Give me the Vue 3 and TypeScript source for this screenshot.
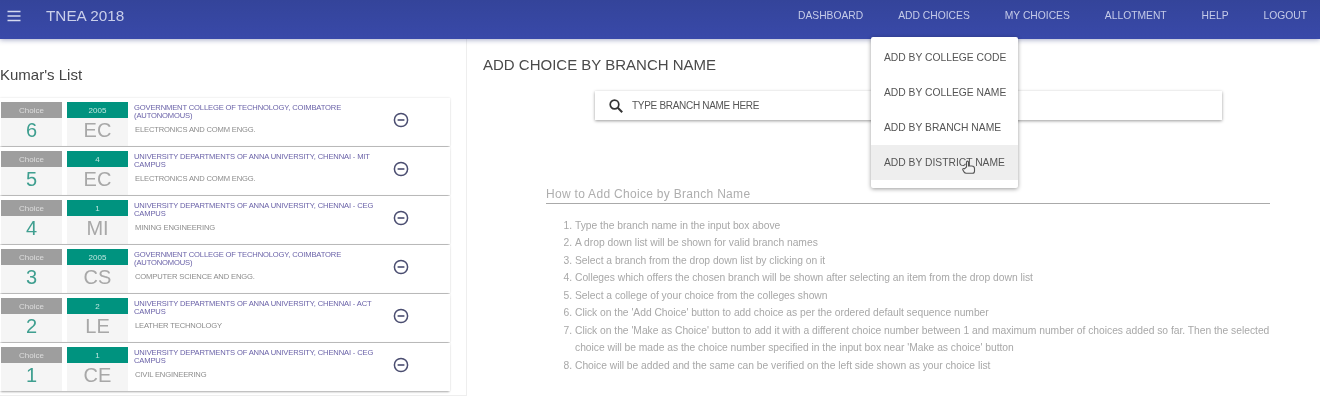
<template>
  <div class="page">
    <header class="topbar">
      <svg class="menu-icon" width="16" height="12" viewBox="0 0 16 12"><path d="M1.5 1.5h13M1.5 6h13M1.5 10.5h13" stroke="#d5daf0" stroke-width="1.6" fill="none" /></svg>
      <span class="brand">TNEA 2018</span>
      <nav class="nav">
        <a v-for="item in navItems" :key="item">{{ item }}</a>
      </nav>
    </header>

    <div class="menu">
      <div v-for="item in menuItems" :key="item" class="menu-item" :class="{ hover: item === 'ADD BY DISTRICT NAME' }">{{ item }}</div>
      <svg class="cursor" width="14" height="16" viewBox="0 0 14 16">
        <path d="M4.5 7V2.2c0-1.4 2-1.4 2 0V6h3.2c1.7 0 2.8 1 2.8 2.6v2.6c0 1.2-.8 2-2 2H4.2c-1 0-1.7-.5-2.2-1.3L.9 10c-.5-1 .7-2 1.6-1.2z" fill="#f2f2f2" stroke="#555" stroke-width="1.1" />
      </svg>
    </div>

    <main class="content">
      <aside class="side">
        <h2 class="list-title">Kumar's List</h2>
        <div class="cards">
          <div v-for="c in choices" :key="c.no" class="card">
            <div class="cell">
              <div class="tag grey">Choice</div>
              <div class="big num">{{ c.no }}</div>
            </div>
            <div class="cell">
              <div class="tag teal">{{ c.code }}</div>
              <div class="big">{{ c.short }}</div>
            </div>
            <div class="info">
              <div class="college">{{ c.college }}</div>
              <div class="branch">{{ c.branch }}</div>
            </div>
            <svg class="remove" width="16" height="16" viewBox="0 0 16 16"><circle cx="8" cy="8" r="6.6" fill="none" stroke="#4a4d70" stroke-width="1.5" /><path d="M4.6 8h6.8" stroke="#4a4d70" stroke-width="1.6" /></svg>
          </div>
        </div>
      </aside>

      <section class="main">
        <h2 class="main-title">ADD CHOICE BY BRANCH NAME</h2>
        <div class="search">
          <svg width="16" height="16" viewBox="0 0 16 16"><circle cx="6.5" cy="6.5" r="4.3" fill="none" stroke="#333" stroke-width="1.7" /><path d="M9.8 9.8l4.4 4.4" stroke="#333" stroke-width="2" /></svg>
          <span>TYPE BRANCH NAME HERE</span>
        </div>
        <div class="guide">
          <h3>How to Add Choice by Branch Name</h3>
          <ol>
            <li v-for="step in steps" :key="step">{{ step }}</li>
          </ol>
        </div>
      </section>
    </main>
  </div>
</template>

<script setup lang="ts">
interface Choice {
  no: number;
  code: string;
  short: string;
  college: string;
  branch: string;
}

const navItems = ['DASHBOARD', 'ADD CHOICES', 'MY CHOICES', 'ALLOTMENT', 'HELP', 'LOGOUT'];

const menuItems = ['ADD BY COLLEGE CODE', 'ADD BY COLLEGE NAME', 'ADD BY BRANCH NAME', 'ADD BY DISTRICT NAME'];

const choices: Choice[] = [
  { no: 6, code: '2005', short: 'EC', college: 'GOVERNMENT COLLEGE OF TECHNOLOGY, COIMBATORE (AUTONOMOUS)', branch: 'ELECTRONICS AND COMM ENGG.' },
  { no: 5, code: '4', short: 'EC', college: 'UNIVERSITY DEPARTMENTS OF ANNA UNIVERSITY, CHENNAI - MIT CAMPUS', branch: 'ELECTRONICS AND COMM ENGG.' },
  { no: 4, code: '1', short: 'MI', college: 'UNIVERSITY DEPARTMENTS OF ANNA UNIVERSITY, CHENNAI - CEG CAMPUS', branch: 'MINING ENGINEERING' },
  { no: 3, code: '2005', short: 'CS', college: 'GOVERNMENT COLLEGE OF TECHNOLOGY, COIMBATORE (AUTONOMOUS)', branch: 'COMPUTER SCIENCE AND ENGG.' },
  { no: 2, code: '2', short: 'LE', college: 'UNIVERSITY DEPARTMENTS OF ANNA UNIVERSITY, CHENNAI - ACT CAMPUS', branch: 'LEATHER TECHNOLOGY' },
  { no: 1, code: '1', short: 'CE', college: 'UNIVERSITY DEPARTMENTS OF ANNA UNIVERSITY, CHENNAI - CEG CAMPUS', branch: 'CIVIL ENGINEERING' },
];

const steps = [
  'Type the branch name in the input box above',
  'A drop down list will be shown for valid branch names',
  'Select a branch from the drop down list by clicking on it',
  'Colleges which offers the chosen branch will be shown after selecting an item from the drop down list',
  'Select a college of your choice from the colleges shown',
  "Click on the 'Add Choice' button to add choice as per the ordered default sequence number",
  "Click on the 'Make as Choice' button to add it with a different choice number between 1 and maximum number of choices added so far. Then the selected choice will be made as the choice number specified in the input box near 'Make as choice' button",
  'Choice will be added and the same can be verified on the left side shown as your choice list',
];
</script>

<style>
html, body {
  margin: 0;
  background: #fff;
  overflow: hidden;
}
</style>

<style scoped>
.page {
  position: relative;
  width: 1320px;
  height: 414px;
  overflow: hidden;
  font-family: "Liberation Sans", Arial, sans-serif;
  background: #fff;
  filter: blur(0.35px);
}

.topbar {
  position: relative;
  z-index: 2;
  display: flex;
  align-items: center;
  box-sizing: border-box;
  height: 39px;
  padding: 0 13px 8px 6px;
  background: linear-gradient(#34449a, #3949a9);
  box-shadow: 0 1px 5px rgba(60, 70, 130, 0.45);
}

.brand {
  margin-left: 24px;
  font-size: 15.3px;
  color: #c9cfea;
}

.nav {
  display: flex;
  gap: 35px;
  margin-left: auto;
}

.nav a {
  font-size: 10.3px;
  color: #c5cbe8;
}

.menu {
  position: absolute;
  z-index: 3;
  top: 37px;
  left: 871px;
  width: 147px;
  height: 151px;
  box-sizing: border-box;
  padding-top: 3px;
  background: #fff;
  border-radius: 2px;
  box-shadow: 0 1px 4px rgba(0, 0, 0, 0.4);
}

.menu-item {
  height: 35px;
  padding-left: 13px;
  line-height: 35px;
  font-size: 10.3px;
  color: #555;
}

.menu-item.hover {
  background: #eeeeee;
}

.cursor {
  position: absolute;
  top: 123px;
  left: 91px;
}

.content {
  display: flex;
  height: 375px;
}

.side {
  box-sizing: border-box;
  width: 467px;
  height: 357px;
  border-right: 1px solid #eeeeee;
  border-bottom: 1px solid #eeeeee;
}

.list-title {
  margin: 27px 0 15px;
  font-size: 15px;
  line-height: 17px;
  font-weight: 400;
  color: #444;
}

.cards {
  display: flex;
  flex-direction: column;
  gap: 1px;
  width: 450px;
}

.card {
  display: flex;
  align-items: center;
  box-sizing: border-box;
  height: 48px;
  padding: 4px 0 0 1px;
  background: #fff;
  box-shadow: 0 2px 2px -1px rgba(0, 0, 0, 0.3), 0 0 2px rgba(0, 0, 0, 0.14);
}

.cell {
  flex: none;
  align-self: flex-start;
  width: 61px;
  height: 44px;
  margin-right: 5px;
  background: #f5f5f5;
  text-align: center;
}

.tag {
  height: 16px;
  line-height: 17px;
  font-size: 8px;
  color: #dedede;
}

.tag.grey {
  background: #9e9e9e;
}

.tag.teal {
  background: #00937f;
  color: #bfe6df;
}

.big {
  height: 28px;
  line-height: 24px;
  font-size: 20px;
  color: #a8a8a8;
}

.big.num {
  color: #3f9f90;
}

.info {
  flex: none;
  width: 248px;
  align-self: flex-start;
  margin: 2px 0 0 1px;
}

.college {
  font-size: 7.6px;
  line-height: 7.5px;
  letter-spacing: -0.15px;
  color: #6a62a8;
}

.branch {
  margin-top: 6px;
  padding-left: 1px;
  font-size: 7.6px;
  line-height: 9px;
  letter-spacing: -0.15px;
  color: #8c8c8c;
}

.remove {
  margin-left: 11px;
  margin-bottom: 9px;
}

.main {
  flex: 1;
  padding-left: 16px;
  min-width: 0;
}

.main-title {
  margin: 17px 0 0;
  font-size: 15px;
  line-height: 17px;
  font-weight: 400;
  color: #4a4a4a;
}

.search {
  display: flex;
  align-items: center;
  gap: 8px;
  box-sizing: border-box;
  width: 627px;
  height: 29px;
  margin: 18px 0 0 112px;
  padding-left: 13px;
  background: #fff;
  box-shadow: 0 1px 3px rgba(0, 0, 0, 0.4);
  font-size: 10px;
  letter-spacing: -0.3px;
  color: #555;
}

.guide {
  width: 724px;
  margin: 67px 0 0 63px;
}

.guide h3 {
  margin: 0;
  padding-bottom: 2px;
  border-bottom: 1px solid #aaa;
  font-size: 12px;
  line-height: 14px;
  font-weight: 400;
  letter-spacing: 0.3px;
  color: #aeaeae;
}

.guide ol {
  margin: 12.5px 0 0;
  padding-left: 29px;
  font-size: 10.3px;
  line-height: 17.5px;
  letter-spacing: -0.02px;
  color: #a8a8a8;
}
</style>
